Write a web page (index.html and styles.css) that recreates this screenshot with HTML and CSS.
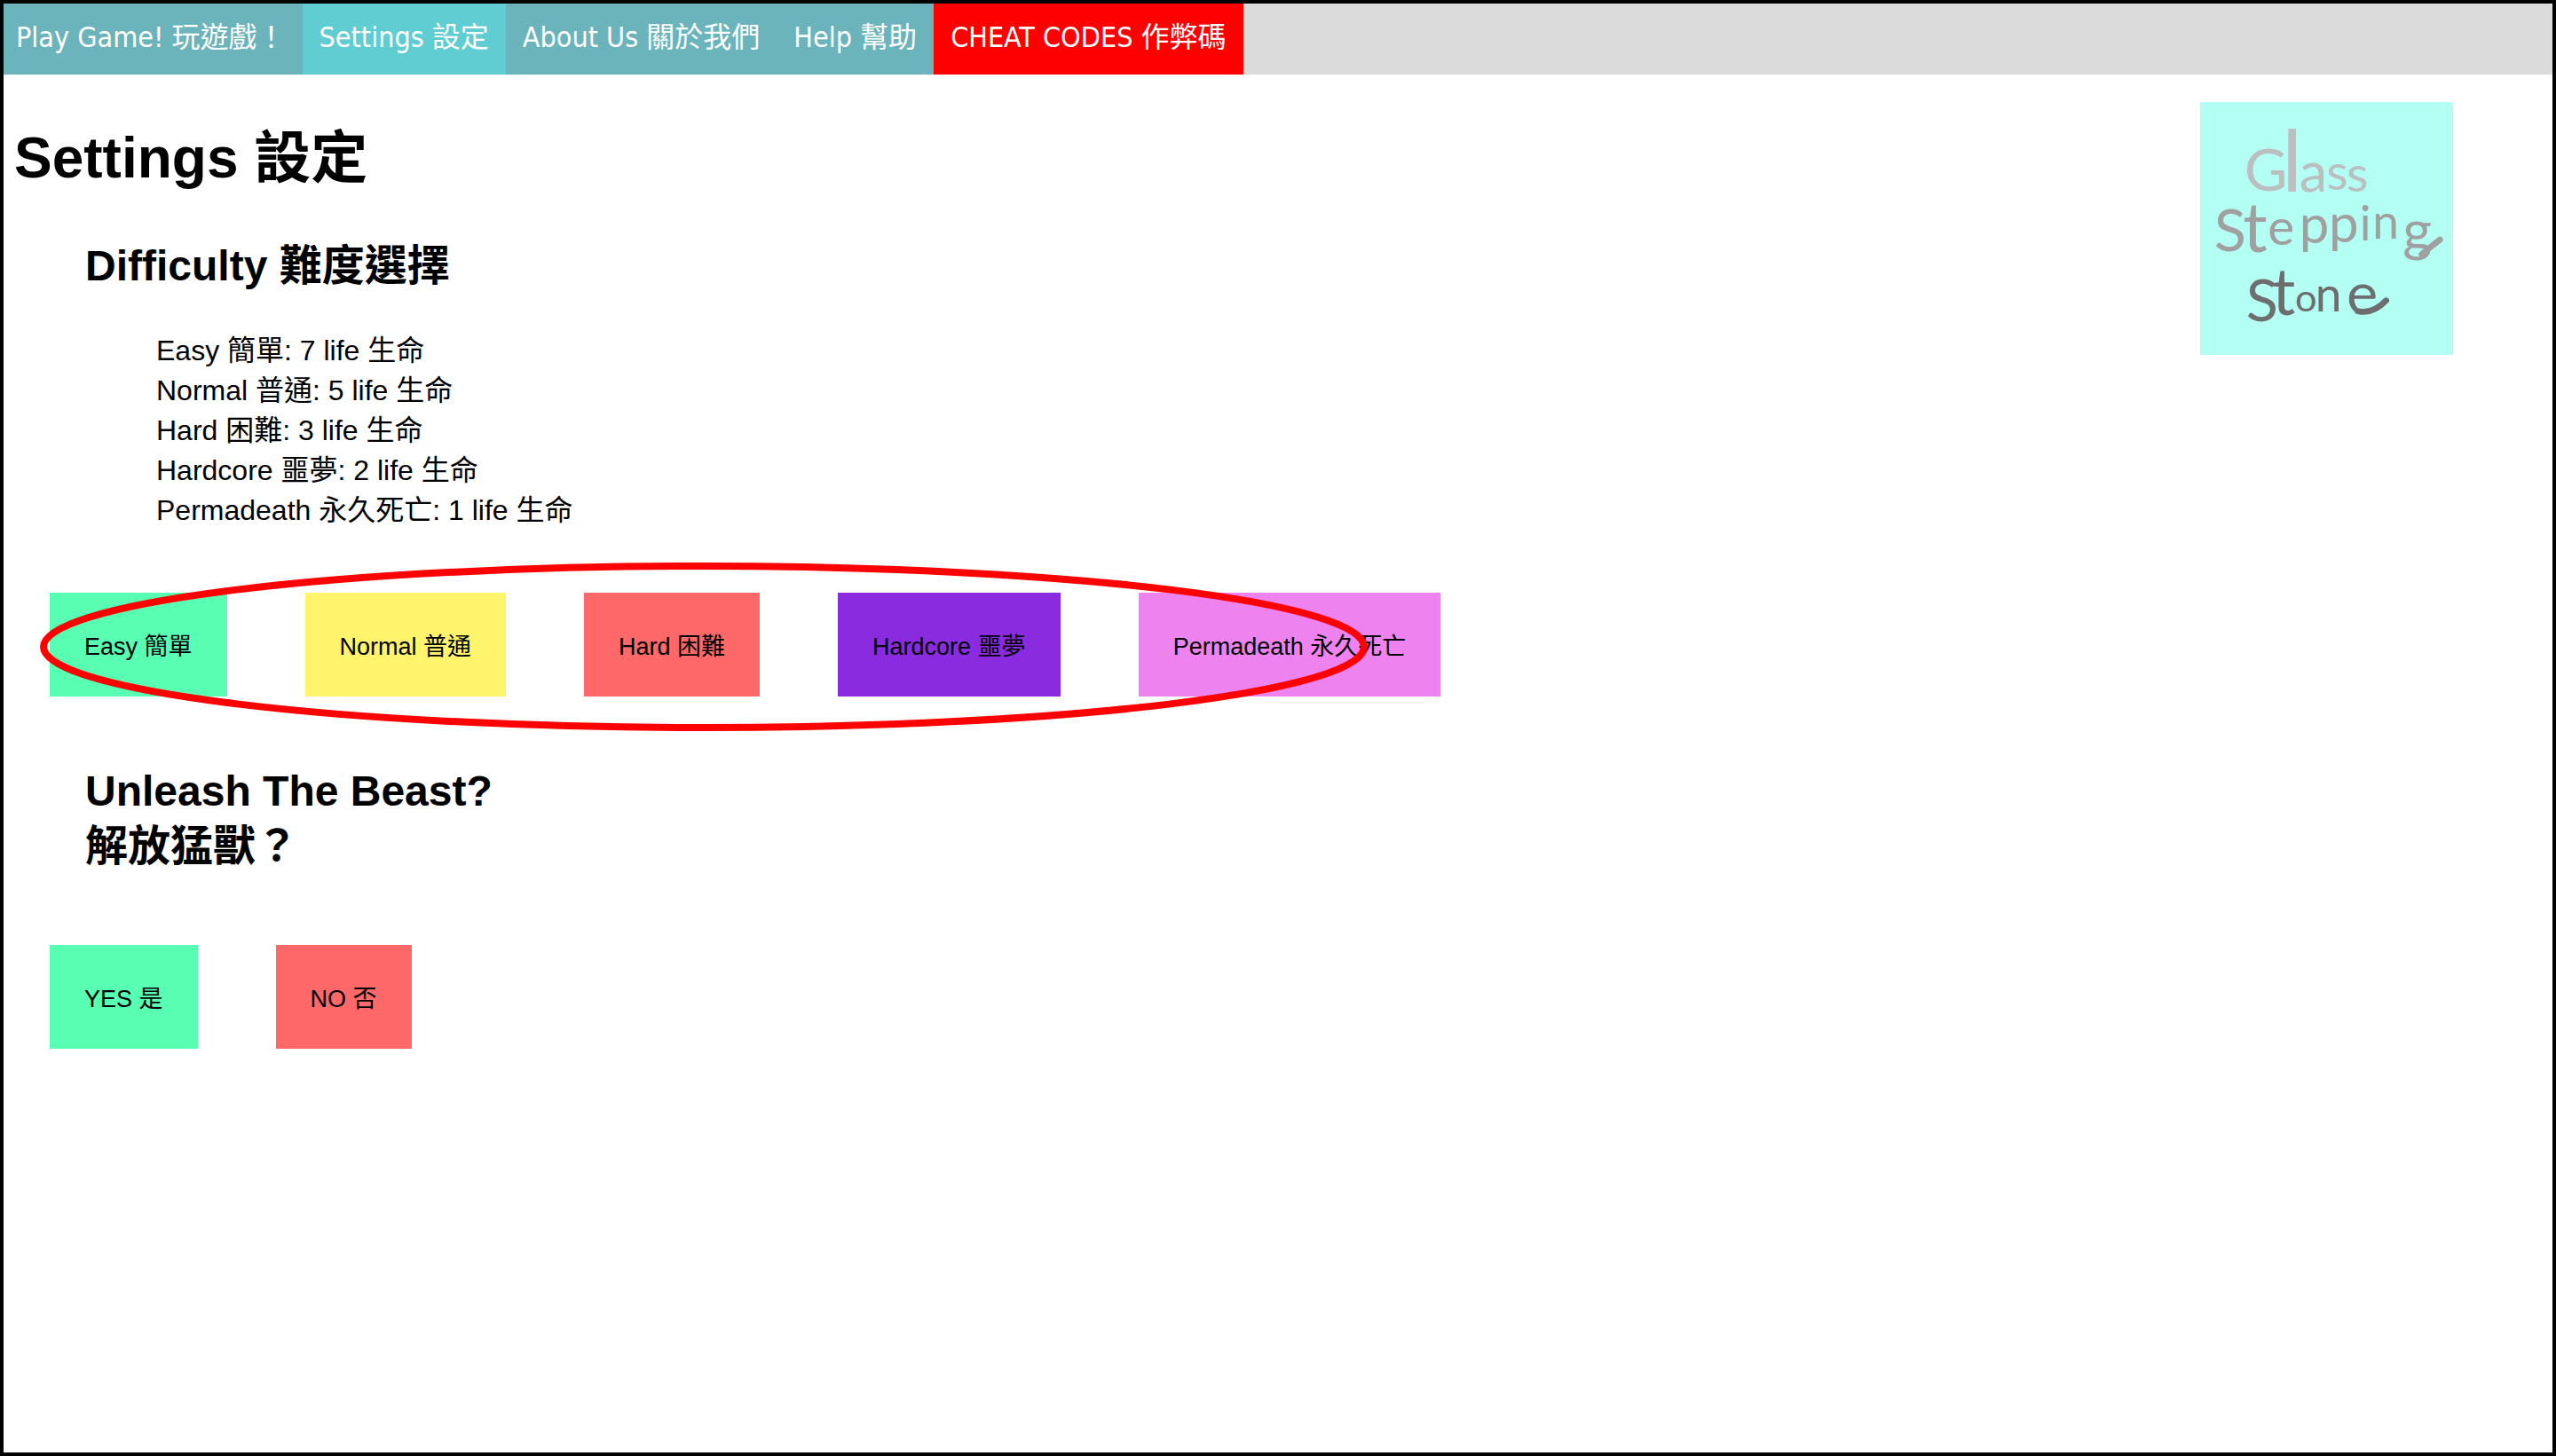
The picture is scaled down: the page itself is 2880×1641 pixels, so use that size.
FILE: index.html
```html
<!DOCTYPE html>
<html lang="zh-Hant">
<head>
<meta charset="utf-8">
<meta name="viewport" content="width=device-width, initial-scale=1">
<title>Settings 設定</title>
<link rel="stylesheet" href="styles.css">
</head>
<body class="page">
<nav class="nav">
  <a class="nav-link" href="#play">Play Game! 玩遊戲！</a>
  <a class="nav-link nav-link-current" href="#settings" aria-current="page">Settings 設定</a>
  <a class="nav-link" href="#about">About Us 關於我們</a>
  <a class="nav-link" href="#help">Help 幫助</a>
  <a class="nav-link nav-link-cheat" href="#cheat">CHEAT CODES 作弊碼</a>
</nav>
<main class="main">
  <div class="settings">
    <h1 class="title">Settings 設定</h1>
    <section>
      <h2 class="heading">Difficulty 難度選擇</h2>
      <ul class="lives">
        <li>Easy 簡單: 7 life 生命</li>
        <li>Normal 普通: 5 life 生命</li>
        <li>Hard 困難: 3 life 生命</li>
        <li>Hardcore 噩夢: 2 life 生命</li>
        <li>Permadeath 永久死亡: 1 life 生命</li>
      </ul>
      <div class="choices">
        <button class="choice green" type="button">Easy 簡單</button>
        <button class="choice yellow" type="button">Normal 普通</button>
        <button class="choice red" type="button">Hard 困難</button>
        <button class="choice purple" type="button">Hardcore 噩夢</button>
        <button class="choice violet" type="button">Permadeath 永久死亡</button>
        <svg class="ring" viewBox="0 0 1496 190" aria-hidden="true"><ellipse cx="748" cy="95" rx="744" ry="91"/></svg>
      </div>
    </section>
    <section>
      <h2 class="heading heading-beast">Unleash The Beast?<br>解放猛獸？</h2>
      <div class="choices">
        <button class="choice green" type="button">YES 是</button>
        <button class="choice red" type="button">NO 否</button>
      </div>
    </section>
  </div>
  <svg class="logo" viewBox="57 45 855 855" role="img" aria-label="Glass Stepping Stone">
    <text class="logo-glass"><tspan x="206" y="345" font-size="200">G</tspan><tspan x="334" y="347" font-size="290">l</tspan><tspan x="392" y="347" font-size="190">a</tspan><tspan x="484" y="343" font-size="170">s</tspan><tspan x="552" y="347" font-size="170">s</tspan></text>
    <text class="logo-stepping"><tspan x="104" y="550" font-size="200">S</tspan><tspan x="202" y="552" font-size="230">t</tspan><tspan x="286" y="528" font-size="170">e</tspan><tspan x="392" y="522" font-size="180">p</tspan><tspan x="492" y="518" font-size="180">p</tspan><tspan x="596" y="514" font-size="160">i</tspan><tspan x="640" y="508" font-size="160">n</tspan><tspan x="742" y="545" font-size="190">g</tspan></text>
    <text class="logo-stone"><tspan x="212" y="785" font-size="200">S</tspan><tspan x="300" y="764" font-size="220">t</tspan><tspan x="378" y="752" font-size="130">o</tspan><tspan x="446" y="752" font-size="160">n</tspan><tspan x="552" y="762" font-size="200">e</tspan></text>
    <path class="logo-tail-g" d="M806 560Q842 530 868 510"/>
    <path class="logo-tail-e" d="M590 752Q640 764 686 716"/>
  </svg>
</main>
</body>
</html>
```

FILE: styles.css
```css
* { box-sizing: border-box; }

.page {
  margin: 0;
  min-height: 100vh;
  border: 4px solid #000;
  background: #fff;
  color: #000;
  font-family: "Liberation Sans", "Noto Sans CJK TC", sans-serif;
  font-size: 32px;
}

.nav {
  display: flex;
  flex-wrap: wrap;
  background: #dbdbdb;
  font-family: "DejaVu Sans Condensed", "Noto Sans CJK TC", sans-serif;
}

.nav-link {
  padding: 18px 19px 22px;
  background: #6cb4bc;
  color: #fff;
  line-height: 40px;
  text-decoration: none;
}

.nav-link:first-child { padding-left: 14px; }
.nav-link-current { background: #60cdd3; }
.nav-link-cheat { background: #f00; }

.main {
  display: flex;
  justify-content: space-between;
  align-items: flex-start;
  padding: 31px 112px 32px 12px;
}

.title {
  margin: 25px 0 0;
  font-size: 64px;
  line-height: 76px;
}

.heading {
  margin: 53px 80px 42px;
  font-size: 48px;
  line-height: 62px;
}

.heading-beast { margin: 76px 80px 80px; }

.lives {
  margin: 0 0 70px;
  padding: 0 0 0 160px;
  list-style: none;
  line-height: 45px;
}

.choices {
  position: relative;
  display: flex;
  flex-wrap: wrap;
  gap: 88px;
  padding-left: 40px;
}

.choice {
  height: 117px;
  padding: 0 39px;
  border: 0;
  color: #000;
  font-family: inherit;
  font-size: 27px;
}

.green { background: #58ffb3; }
.yellow { background: #fff46b; }
.red { background: #ff6868; }
.purple { background: #8a2be0; }
.violet { background: #ee82ee; }

/* marker ring lying over the difficulty buttons */
.ring {
  position: absolute;
  top: -34px;
  left: 29px;
  width: 1496px;
  height: 190px;
  fill: none;
  stroke: #f00;
  stroke-width: 8px;
  pointer-events: none;
}

.logo {
  flex: none;
  width: 285px;
  height: 285px;
  background: #b3fff3;
  font-family: Lato, sans-serif;
}

.logo path {
  fill: none;
  stroke-width: 20px;
  stroke-linecap: round;
}

.logo-glass { fill: #bcbfbf; }
.logo-stepping { fill: #a0a0a0; }
.logo-stone { fill: #6e6e6e; }
.logo-tail-g { stroke: #a0a0a0; }
.logo-tail-e { stroke: #6e6e6e; }
```
